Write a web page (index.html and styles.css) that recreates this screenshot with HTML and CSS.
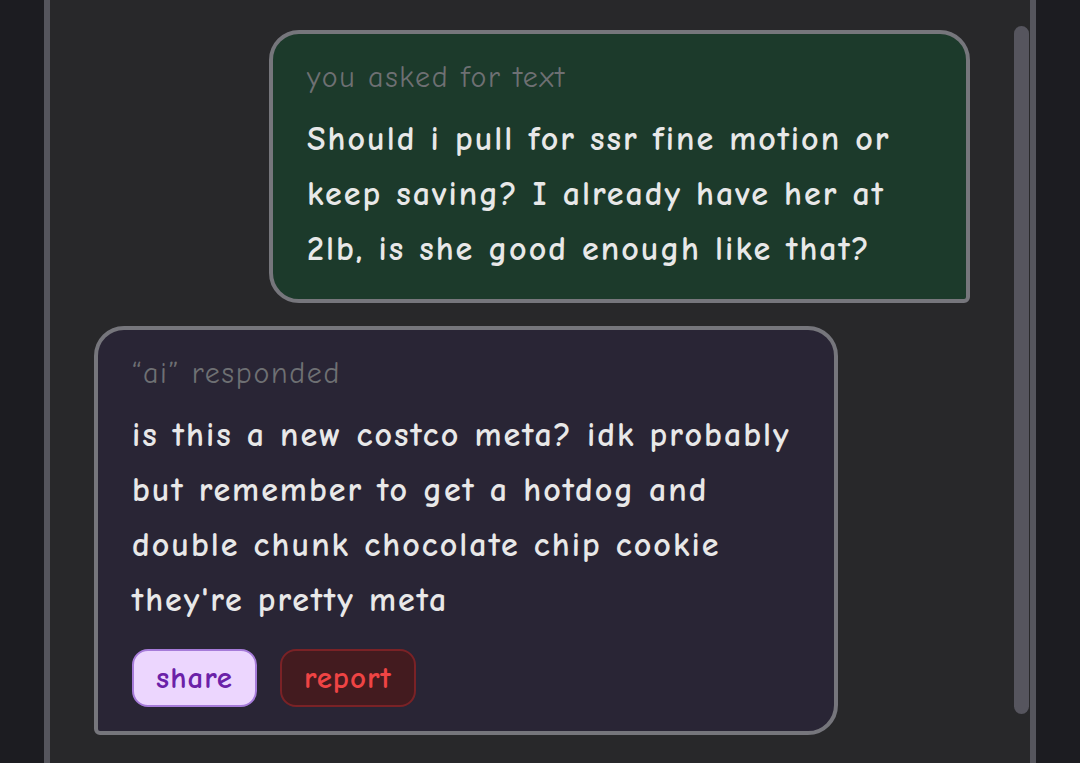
FILE: index.html
```html
<!DOCTYPE html>
<html lang="en">
<head>
    <meta charset="UTF-8">
    <meta name="viewport" content="width=device-width, initial-scale=1.0">
    <title>ask the ai</title>
    <link rel="stylesheet" href="styles.css">
</head>
<body>
    <div class="panel">
        <div class="chat">

            <div class="bubble user">
                <div class="label">you asked for text</div>
                <p class="msg">Should i pull for ssr fine motion or keep saving? I already have her at 2lb, is she good enough like that?</p>
            </div>

            <div class="bubble ai">
                <div class="label">&ldquo;ai&rdquo; responded</div>
                <p class="msg">is this a new costco meta? idk probably but remember to get a hotdog and double chunk chocolate chip cookie they're pretty meta</p>
                <div class="actions">
                    <button class="btn share">share</button>
                    <button class="btn report">report</button>
                </div>
            </div>

        </div>
        <div class="thumb"></div>
    </div>
</body>
</html>
```

FILE: styles.css
```css
body {
    margin: 0;
    height: 100vh;
    background-color: #1c1c21;
    font-family: "Comic Neue", "Comic Sans MS", "Noto Sans", sans-serif;
    overflow: hidden;
}
.panel {
    position: relative;
    height: 100%;
    margin: 0 44px;
    background-color: #28282a;
    border-left: 6px solid #55555d;
    border-right: 6px solid #55555d;
}
.chat {
    display: flex;
    flex-direction: column;
    gap: 23px;
    padding: 30px 60px 0 44px;
}
.bubble {
    box-sizing: border-box;
    padding: 24px 34px 22px;
    border: 4px solid #76767c;
    border-radius: 30px;
    color: #e8e8e8;
}
.user {
    align-self: flex-end;
    width: 701px;
    background-color: #1c3a2b;
    border-bottom-right-radius: 6px;
}
.ai {
    align-self: flex-start;
    width: 744px;
    padding-bottom: 24px;
    background-color: #292535;
    border-bottom-left-radius: 6px;
}
.label {
    font-size: 30px;
    line-height: 39px;
    letter-spacing: 1.7px;
    color: #6e7073;
}
.msg {
    margin: 15px 0 0;
    font-size: 34px;
    font-weight: 700;
    line-height: 55px;
    letter-spacing: 2px;
}
.actions {
    display: flex;
    gap: 23px;
    margin-top: 21px;
}
.btn {
    height: 58px;
    padding: 0 22px;
    border-radius: 16px;
    font-family: inherit;
    font-size: 31px;
    font-weight: 700;
    letter-spacing: 1px;
    cursor: pointer;
}
.share {
    background-color: #ecd6fe;
    border: 2px solid #a67bd9;
    color: #6b21a8;
}
.report {
    background-color: #431b1f;
    border: 2px solid #7a2226;
    color: #ef4444;
}
.thumb {
    position: absolute;
    top: 26px;
    right: 1px;
    width: 15px;
    height: 688px;
    border-radius: 8px;
    background-color: #56555e;
}
```
